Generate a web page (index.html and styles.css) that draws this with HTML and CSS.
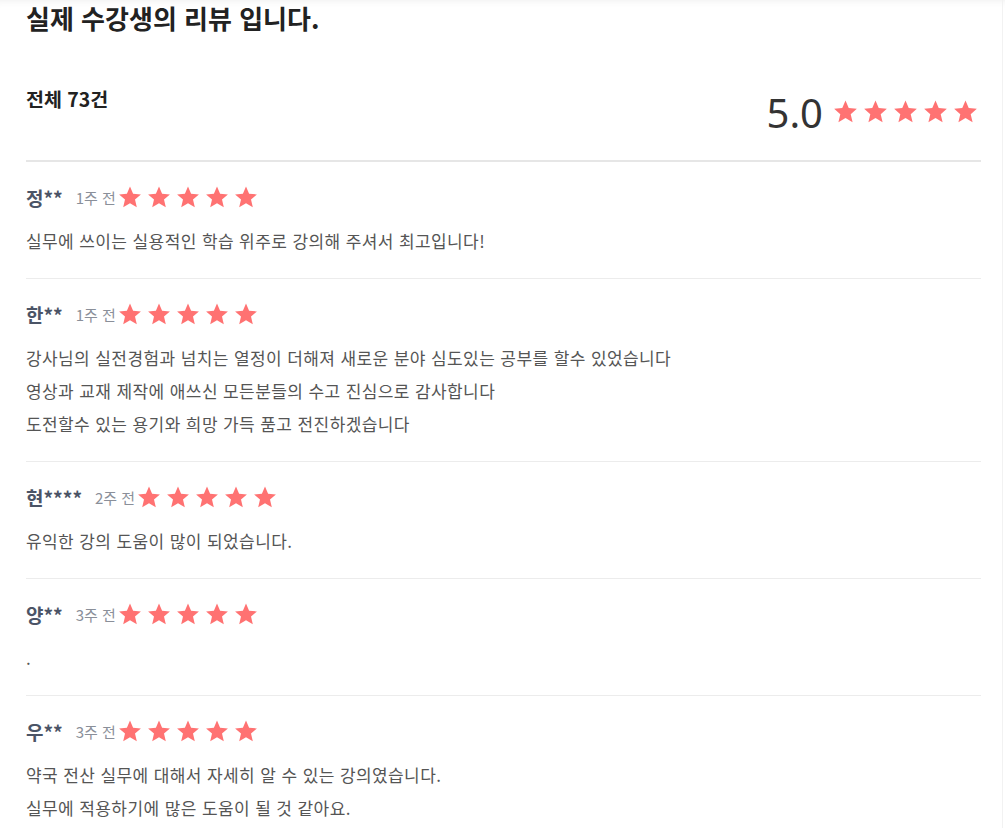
FILE: index.html
```html
<!DOCTYPE html>
<html lang="ko">
<head>
    <meta charset="UTF-8">
    <meta name="viewport" content="width=device-width, initial-scale=1.0">
    <title>수강생 리뷰</title>
    <link rel="stylesheet" href="styles.css">
</head>
<body>

<svg width="0" height="0" class="defs">
    <symbol id="star" viewBox="0 0 24 24">
        <path d="M12 1.5l3.1 7.2 7.8.7-5.9 5.2 1.8 7.7L12 18.2l-6.8 4.1 1.8-7.7-5.9-5.2 7.8-.7z"/>
    </symbol>
</svg>

<div class="reviews">
    <h1>실제 수강생의 리뷰 입니다.</h1>

    <div class="summary">
        <div class="total">전체 73건</div>
        <div class="score">
            <span class="score-num">5.0</span>
            <span class="stars stars-big">
                <svg><use href="#star"/></svg><svg><use href="#star"/></svg><svg><use href="#star"/></svg><svg><use href="#star"/></svg><svg><use href="#star"/></svg>
            </span>
        </div>
    </div>

    <ul class="review-list" id="reviewList"></ul>
</div>

<script>
    // review data
    const reviews = [
        { name: '정**', date: '1주 전', text: ['실무에 쓰이는 실용적인 학습 위주로 강의해 주셔서 최고입니다!'] },
        { name: '한**', date: '1주 전', text: [
            '강사님의 실전경험과 넘치는 열정이 더해져 새로운 분야 심도있는 공부를 할수 있었습니다',
            '영상과 교재 제작에 애쓰신 모든분들의 수고 진심으로 감사합니다',
            '도전할수 있는 용기와 희망 가득 품고 전진하겠습니다'
        ] },
        { name: '현****', date: '2주 전', text: ['유익한 강의 도움이 많이 되었습니다.'] },
        { name: '양**', date: '3주 전', text: ['.'] },
        { name: '우**', date: '3주 전', text: [
            '약국 전산 실무에 대해서 자세히 알 수 있는 강의였습니다.',
            '실무에 적용하기에 많은 도움이 될 것 같아요.'
        ] }
    ];

    const star = '<svg><use href="#star"/></svg>';
    const list = document.getElementById('reviewList');
    reviews.forEach(r => {
        const li = document.createElement('li');
        li.className = 'review';
        li.innerHTML = `<div class="review-head">
                            <span class="name">${r.name}</span>
                            <span class="date">${r.date}</span>
                            <span class="stars">${star.repeat(5)}</span>
                        </div>
                        <div class="review-body">${r.text.map(t => '<p>' + t + '</p>').join('')}</div>`;
        list.appendChild(li);
    });
</script>

</body>
</html>
```

FILE: styles.css
```css
body {
    margin: 0;
    font-family: "Noto Sans CJK KR", "Noto Sans", sans-serif;
    color: #333;
    background: #fff;
    box-shadow: inset 0 8px 8px -8px rgba(0, 0, 0, 0.08);
    min-height: 100vh;
}

.defs {
    display: block;
    width: 0;
    height: 0;
}

.reviews {
    padding: 0 21px 0 26px;
    margin-right: 2px;
    border-right: 1px solid #f2f2f2;
}

h1 {
    margin: 0;
    font-size: 26px;
    line-height: 36px;
    font-weight: bold;
    color: #222;
}

.summary {
    display: flex;
    justify-content: space-between;
    align-items: flex-end;
    padding: 50px 0 23px;
    border-bottom: 2px solid #e6e6e6;
}

.total {
    align-self: flex-start;
    font-size: 19.5px;
    line-height: 26px;
    font-weight: bold;
    color: #222;
}

.score {
    display: flex;
    align-items: center;
    gap: 10px;
    margin-top: 3px;
}

.score-num {
    font-family: "Noto Sans", sans-serif;
    font-size: 40px;
    line-height: 48px;
    color: #333;
}

.stars {
    display: inline-flex;
    gap: 5px;
    margin-left: 2px;
    fill: #ff7272;
}

.stars svg {
    width: 24px;
    height: 24px;
}

.stars-big {
    margin: 0 3px 4px 0;
}

.stars-big svg {
    width: 25px;
    height: 25px;
}

.review-list {
    list-style: none;
    margin: 0;
    padding: 0;
}

.review {
    padding: 22px 0 21px;
    border-bottom: 1px solid #ececec;
}

.review-head {
    display: flex;
    align-items: center;
    height: 26px;
}

.name {
    font-size: 19px;
    font-weight: bold;
    color: #4b5466;
    margin-right: 13px;
}

.date {
    font-size: 15px;
    color: #8a8f99;
}

.review-body {
    margin-top: 14px;
}

.review-body p {
    margin: 0;
    font-size: 17px;
    letter-spacing: 0.4px;
    line-height: 33px;
    color: #555;
}
```
